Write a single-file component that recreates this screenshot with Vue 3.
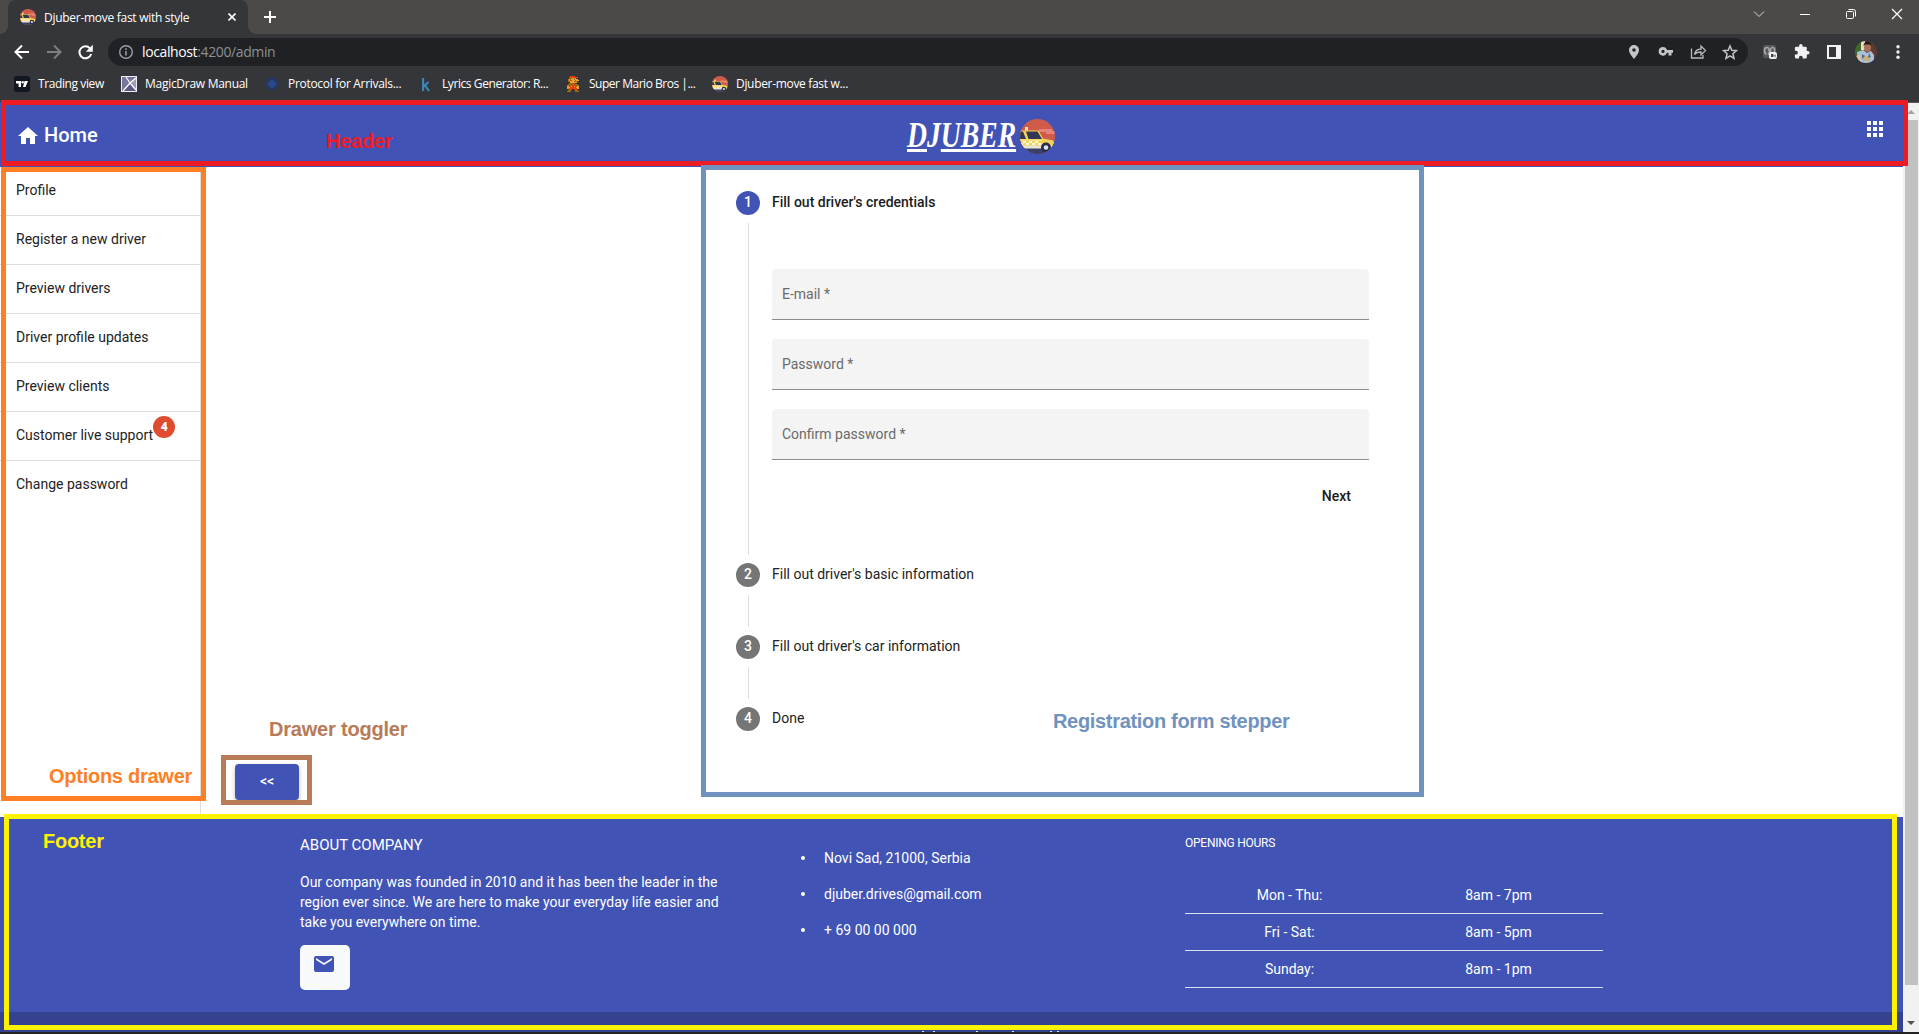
<script setup>
const bookmarks = [
  { icon: 'tv', label: 'Trading view', width: 107, spacing: -0.4 },
  { icon: 'md', label: 'MagicDraw Manual', width: 143, spacing: -0.28 },
  { icon: 'protocol', label: 'Protocol for Arrivals...', width: 154, spacing: -0.3 },
  { icon: 'k', label: 'Lyrics Generator: R...', width: 147, spacing: -0.42 },
  { icon: 'mario', label: 'Super Mario Bros |...', width: 147, spacing: -0.48 },
  { icon: 'taxi', label: 'Djuber-move fast w...', width: 150, spacing: -0.32 },
]
const menu = [
  'Profile',
  'Register a new driver',
  'Preview drivers',
  'Driver profile updates',
  'Preview clients',
  'Customer live support',
  'Change password',
]
const fields = ['E-mail *', 'Password *', 'Confirm password *']
const laterSteps = [
  { n: 2, label: "Fill out driver's basic information" },
  { n: 3, label: "Fill out driver's car information" },
  { n: 4, label: 'Done' },
]
const contacts = ['Novi Sad, 21000, Serbia', 'djuber.drives@gmail.com', '+ 69 00 00 000']
const hours = [
  ['Mon - Thu:', '8am - 7pm'],
  ['Fri - Sat:', '8am - 5pm'],
  ['Sunday:', '8am - 1pm'],
]
// Pixel sprite of the Mario bookmark: r = red, b = brown, s = skin
const sprite = [
  '...rrrrr....',
  '..rrrrrrrrr.',
  '..bbbssbs...',
  '.bsbsssbsss.',
  '.bsbbsssbsss',
  '.bbssssbbbb.',
  '...sssssss..',
  '..bbrbbb....',
  '.bbbrbbrbbb.',
  'bbbbrrrrbbbb',
  'ssbrsrrsrbss',
  'sssrrrrrrsss',
  'ssrrrrrrrrss',
  '..rrr..rrr..',
  '.bbb....bbb.',
  'bbbb....bbbb',
]
const spriteColors = { r: '#e8400c', b: '#a06a10', s: '#f0a030' }
const pixels = sprite.flatMap((row, y) =>
  [...row].map((c, x) => ({ x, y, fill: spriteColors[c] })).filter((p) => p.fill),
)
</script>

<template>
  <div class="screen">
    <svg width="0" height="0" class="defs">
      <defs>
        <clipPath id="disc"><circle cx="17.5" cy="17.5" r="17.5" /></clipPath>
        <symbol id="taxi" viewBox="0 0 35 35">
          <g clip-path="url(#disc)">
            <rect width="35" height="35" fill="#cf5b4b" />
            <path d="M19 10h13v2h3v3h-9v-2h-7z" fill="#e58279" />
            <rect y="26" width="35" height="9" fill="#3b3f69" />
            <path d="M0 11.500h18.500l4.500 8 10 2 2 3v4H0z" fill="#f2d355" />
            <path d="M0 12.500h3l3 7.500H0zM6 12.500h11.500l4.500 7.500H8.500z" fill="#333754" />
            <path d="M0 20.500h22v1.500H0z" fill="#f8e08a" />
            <path d="M0 24h3v2H0zM6 24h3v2H6zM12 24h3v2h-3zM18 24h3v2h-3zM3 22h3v2H3zM9 22h3v2H9zM15 22h3v2h-3z" fill="#fff8dc" />
            <path d="M0 26.500h35v3H0z" fill="#e9e5d5" />
            <rect x="5" y="8" width="3" height="3.500" fill="#f6e7b4" />
            <circle cx="26" cy="28.500" r="5" fill="#292d4d" />
            <circle cx="26" cy="28.500" r="2.300" fill="#dfe3ee" />
          </g>
        </symbol>
      </defs>
    </svg>

    <div class="tabstrip">
      <div class="tab">
        <svg width="16" height="16"><use href="#taxi" /></svg>
        <span class="tab-title">Djuber-move fast with style</span>
        <svg class="tab-close" width="8" height="8" viewBox="0 0 8 8"><path d="M.5.5l7 7M7.500.5l-7 7" stroke="#fff" stroke-width="1.600" /></svg>
      </div>
      <svg class="tab-add" width="12" height="12" viewBox="0 0 12 12"><path d="M6 0v12M0 6h12" stroke="#fff" stroke-width="2" /></svg>
      <div class="window-controls">
        <svg width="46" height="28" viewBox="0 0 46 28" fill="none" stroke="#d8d8d7"><path d="M18 11.500l5 5 5-5" /></svg>
        <svg width="46" height="28" viewBox="0 0 46 28" fill="none" stroke="#fff"><path d="M18 14.500h10" /></svg>
        <svg width="46" height="28" viewBox="0 0 46 28" fill="none" stroke="#fff"><rect x="18.500" y="11.500" width="7" height="7" rx="1" /><path d="M20.500 9.500h5a2 2 0 0 1 2 2v5" /></svg>
        <svg width="46" height="28" viewBox="0 0 46 28" fill="none" stroke="#fff" stroke-width="1.200"><path d="M18 9l10 10M28 9l-10 10" /></svg>
      </div>
    </div>

    <div class="toolbar">
      <svg width="32" height="28" viewBox="0 0 32 28" fill="none" stroke="#fff" stroke-width="2"><path d="M23 14H10M16 7.500L9.500 14l6.500 6.500" /></svg>
      <svg width="32" height="28" viewBox="0 0 32 28" fill="none" stroke="#7d7e80" stroke-width="2"><path d="M9 14h13M16 7.500l6.500 6.500-6.500 6.500" /></svg>
      <svg width="32" height="28" viewBox="0 0 32 28"><path d="M20 10.300A6 6 0 1 0 21.200 16" fill="none" stroke="#fff" stroke-width="2" /><path d="M22.800 6.800v7h-7z" fill="#fff" /></svg>
      <div class="omnibox">
        <svg width="14" height="14" viewBox="0 0 14 14"><circle cx="7" cy="7" r="6.300" fill="none" stroke="#9aa0a6" stroke-width="1.400" /><path d="M7 6v4.500M7 3.300v1.600" stroke="#9aa0a6" stroke-width="1.500" /></svg>
        <span class="url"><b>localhost</b>:4200/admin</span>
        <div class="omni-icons">
          <svg width="32" height="28" viewBox="0 0 32 28"><path fill-rule="evenodd" d="M16 7a5 5 0 0 0-5 5c0 3.500 5 9 5 9s5-5.500 5-9a5 5 0 0 0-5-5zm0 3.200a1.800 1.800 0 1 1 0 3.600 1.800 1.800 0 0 1 0-3.600z" fill="#c4c5c7" /></svg>
          <svg width="32" height="28" viewBox="0 0 32 28"><path fill-rule="evenodd" d="M13 9a4.300 4.300 0 1 0 4 5.800h1.500V17.500h3v-2.700H23v-2.900h-6A4.300 4.300 0 0 0 13 9zm0 2.800a1.600 1.600 0 1 1 0 3.200 1.600 1.600 0 0 1 0-3.200z" fill="#c4c5c7" /></svg>
          <svg width="32" height="28" viewBox="0 0 32 28" fill="none" stroke="#b9babc" stroke-width="1.300"><path d="M9.500 10.500v9.500h11.500v-3M12.500 16.500c.8-4 3-5.500 6.500-5.500V8l4.500 4.500-4.500 4.500v-3c-3 0-5 .5-6.500 2.500z" /></svg>
          <svg width="32" height="28" viewBox="0 0 32 28" fill="none" stroke="#c4c5c7" stroke-width="1.500"><path d="M16 8l1.800 4.300 4.600.4-3.500 3 1.100 4.600-4-2.500-4 2.500 1.100-4.600-3.500-3 4.600-.4z" /></svg>
        </div>
      </div>
      <div class="extensions">
        <svg width="32" height="28" viewBox="0 0 32 28"><rect x="9" y="7" width="13" height="13" rx="2.500" fill="#58595b" /><path d="M12.300 16.500c-3-3-2-7 .7-7s3 6 1 7m3.500-1c-2-3-1-6 1-6s3 3 1.500 5" fill="none" stroke="#aaa" stroke-width="1.600" /><rect x="15" y="14" width="8" height="7" rx="2" fill="#f0f0f0" /><path d="M17 16h2.500v3H17zm3 1.500l1.500-1v3z" fill="#444" /></svg>
        <svg width="32" height="28" viewBox="0 0 32 28"><path transform="translate(7.500 5.200) scale(.7)" d="M20.500 11H19V7a2 2 0 0 0-2-2h-4V3.500a2.500 2.500 0 0 0-5 0V5H4a2 2 0 0 0-2 2v3.800h1.500a2.700 2.700 0 0 1 0 5.400H2V20a2 2 0 0 0 2 2h3.800v-1.500a2.700 2.700 0 0 1 5.400 0V22H17a2 2 0 0 0 2-2v-4h1.500a2.500 2.500 0 0 0 0-5z" fill="#f1f1f2" /></svg>
        <svg width="32" height="28" viewBox="0 0 32 28"><path fill-rule="evenodd" d="M9 7h14v14H9zm2 2v10h7V9z" fill="#f4f4f5" /></svg>
        <svg width="32" height="28" viewBox="0 0 32 28">
          <clipPath id="face"><circle cx="16" cy="14" r="11" /></clipPath>
          <g clip-path="url(#face)">
            <rect width="32" height="28" fill="#5d3b32" />
            <path d="M5 3h9v9l-4 5H5z" fill="#3f6b28" /><path d="M11 3h4v9h-4z" fill="#e9dcc2" />
            <ellipse cx="17.500" cy="9.500" rx="3.500" ry="4.500" fill="#a8705a" /><path d="M13.500 8c0-6 8-6 8 0l-1.500-1.500h-5z" fill="#231c1c" />
            <path d="M7 14l6-2 4 3 4-2 3 4v10H8z" fill="#a9c0da" /><path d="M13 18h7v5h-7z" fill="#c9b27c" /><path d="M12 16l3 2-3 3zM19 15l2 4-3 1z" fill="#566a88" /><path d="M6 18l4-2 2 9z" fill="#d8c0a7" />
          </g>
        </svg>
        <svg width="32" height="28" viewBox="0 0 32 28" fill="#f1f1f2"><circle cx="16" cy="8.700" r="1.700" /><circle cx="16" cy="14" r="1.700" /><circle cx="16" cy="19.300" r="1.700" /></svg>
      </div>
    </div>

    <div class="bookmarks">
      <div v-for="b in bookmarks" :key="b.label" class="bookmark" :style="{ width: b.width + 'px', letterSpacing: b.spacing + 'px' }">
        <svg v-if="b.icon === 'tv'" width="16" height="16" viewBox="0 0 16 16"><rect width="16" height="16" rx="3" fill="#131722" /><path d="M2 5h5v6H4.600V7.500H2zM10.500 5H14l-2.500 6H9z" fill="#fff" /><circle cx="8.700" cy="6.300" r="1.200" fill="#fff" /></svg>
        <svg v-else-if="b.icon === 'md'" width="16" height="16" viewBox="0 0 16 16"><rect width="16" height="16" fill="#ecedf5" /><path d="M1 1h14v14H1z" fill="#77779e" /><path d="M9 7l6-5v11z" fill="#9a9abb" /><path d="M1 15l7-7 7 7z" fill="#5a5a80" /><path d="M5 1l4 6 6 7M15 2L9 7l-7 8" stroke="#fff" stroke-width="1.200" fill="none" /></svg>
        <svg v-else-if="b.icon === 'protocol'" width="16" height="16" viewBox="0 0 16 16"><circle cx="8" cy="8" r="6" fill="#243866" stroke="#213c78" stroke-dasharray="1.500 .8" /><circle cx="8" cy="8" r="3" fill="none" stroke="#3155a2" /><path d="M8 4.500v7M4.500 8h7" stroke="#3155a2" /></svg>
        <svg v-else-if="b.icon === 'k'" width="16" height="16" viewBox="0 0 16 16"><path d="M5.100 2v13M5.500 10.500l5-4.500M7 9.300l4 5.700" stroke="#3d87b9" stroke-width="2.100" fill="none" /></svg>
        <svg v-else-if="b.icon === 'mario'" width="16" height="16" viewBox="-2 0 16 16" shape-rendering="crispEdges"><rect v-for="(p, i) in pixels" :key="i" :x="p.x" :y="p.y" width="1" height="1" :fill="p.fill" /></svg>
        <svg v-else width="16" height="16"><use href="#taxi" /></svg>
        <span>{{ b.label }}</span>
      </div>
    </div>

    <div class="viewport">
      <div class="page">
        <header class="header">
          <div class="home">
            <svg width="24" height="24" viewBox="0 0 24 24"><path d="M10 20v-6h4v6h5v-8h3L12 3 2 12h3v8z" fill="#fff" /></svg>
            <span>Home</span>
          </div>
          <div class="brand">
            <div class="wordmark"><u>D</u>J<u>UBER</u></div>
            <svg width="35" height="35"><use href="#taxi" /></svg>
          </div>
          <svg class="apps" width="16" height="16" viewBox="0 0 16 16"><path d="M0 0h4v4H0zM6 0h4v4H6zM12 0h4v4h-4zM0 6h4v4H0zM6 6h4v4H6zM12 6h4v4h-4zM0 12h4v4H0zM6 12h4v4H6zM12 12h4v4h-4z" fill="#fff" /></svg>
        </header>

        <div class="body">
          <nav class="drawer">
            <div v-for="item in menu" :key="item" class="drawer-item">
              <span class="drawer-label">{{ item }}<i v-if="item === 'Customer live support'" class="badge">4</i></span>
            </div>
          </nav>
          <main class="content">
            <button class="toggle">&lt;&lt;</button>
            <section class="stepper">
              <div class="step-header active"><i class="num">1</i><span>Fill out driver's credentials</span></div>
              <div class="step-body">
                <div v-for="f in fields" :key="f" class="field">{{ f }}</div>
                <div class="next-row"><span>Next</span></div>
              </div>
              <div v-for="s in laterSteps" :key="s.n" class="step-header" :class="{ linked: s.n < 4 }"><i class="num">{{ s.n }}</i><span>{{ s.label }}</span></div>
            </section>
          </main>
        </div>

        <footer class="footer">
          <div class="footer-main">
            <div class="about">
              <h5>ABOUT COMPANY</h5>
              <p>Our company was founded in 2010 and it has been the leader in the<br />region ever since. We are here to make your everyday life easier and<br />take you everywhere on time.</p>
              <div class="mail"><svg width="20" height="16" viewBox="0 0 20 16"><path fill-rule="evenodd" d="M2 0h16a2 2 0 0 1 2 2v12a2 2 0 0 1-2 2H2a2 2 0 0 1-2-2V2a2 2 0 0 1 2-2zm16 4V2l-8 5-8-5v2l8 5z" fill="#4154b6" /></svg></div>
            </div>
            <ul class="contacts">
              <li v-for="c in contacts" :key="c">{{ c }}</li>
            </ul>
            <div class="hours">
              <h6>OPENING HOURS</h6>
              <div v-for="h in hours" :key="h[0]" class="hours-row"><span>{{ h[0] }}</span><span>{{ h[1] }}</span></div>
            </div>
          </div>
          <div class="copyright">
            <svg width="140" height="1" viewBox="0 0 140 1"><path d="M0 0h2v1H0zM11 0h2v1h-2zM54 0h2v1h-2zM90 0h2v1h-2zM128 0h2v1h-2zM135 0h2v1h-2z" fill="#dfe2f2" /></svg>
          </div>
        </footer>
      </div>
      <div class="scrollbar">
        <svg width="15" height="17" viewBox="0 0 15 17"><path d="M4 11h8L8 7z" fill="#a3a3a3" /></svg>
        <div class="thumb"></div>
        <svg class="down" width="15" height="17" viewBox="0 0 15 17"><path d="M4 6h8l-4 4z" fill="#505050" /></svg>
      </div>
    </div>

    <div class="frame frame-header"></div>
    <div class="frame frame-drawer"></div>
    <div class="frame frame-stepper"></div>
    <div class="frame frame-toggle"></div>
    <div class="frame frame-footer"></div>
    <span class="note note-header">Header</span>
    <span class="note note-drawer">Options drawer</span>
    <span class="note note-stepper">Registration form stepper</span>
    <span class="note note-toggle">Drawer toggler</span>
    <span class="note note-footer">Footer</span>
  </div>
</template>

<style>
body { margin: 0; overflow: hidden; }
</style>

<style scoped>
* { box-sizing: border-box; }
svg { display: block; flex: none; }
.screen { position: relative; width: 1919px; height: 1034px; overflow: hidden; display: flex; flex-direction: column; background: #242424; font-family: Roboto, sans-serif; font-size: 14px; white-space: nowrap; }
.defs { position: absolute; }

.tabstrip { height: 34px; flex: none; display: flex; background: #4b4a47; padding-left: 8px; font-family: "Open Sans", sans-serif; }
.tab { position: relative; width: 240px; height: 34px; display: flex; align-items: center; padding: 0 12px; background: #35363a; border-radius: 8px 8px 0 0; color: #fff; font-size: 12px; }
.tab::before, .tab::after { content: ""; position: absolute; bottom: 0; width: 8px; height: 8px; }
.tab::before { left: -8px; background: radial-gradient(circle at 0 0, transparent 7.500px, #35363a 8px); }
.tab::after { right: -8px; background: radial-gradient(circle at 100% 0, transparent 7.500px, #35363a 8px); }
.tab-title { margin-left: 8px; letter-spacing: -0.28px; }
.tab-close { margin-left: auto; }
.tab-add { margin: 11px 0 0 16px; }
.window-controls { margin-left: auto; display: flex; margin-right: -1px; }

.toolbar { height: 32px; flex: none; display: flex; padding-top: 4px; padding-left: 6px; background: #35363a; }
.omnibox { margin-left: 6px; width: 1640px; height: 28px; display: flex; align-items: center; padding-left: 11px; background: #202124; border-radius: 14px; font-family: "Open Sans", sans-serif; }
.url { margin-left: 9px; padding-bottom: 1px; color: #8d9094; font-size: 14px; letter-spacing: -0.38px; }
.url b { color: #fff; font-weight: 400; }
.omni-icons { margin-left: auto; margin-right: 2px; display: flex; }
.extensions { display: flex; margin-left: 6px; }

.bookmarks { height: 36px; flex: none; display: flex; padding-left: 14px; background: #35363a; color: #fff; font-family: "Open Sans", sans-serif; font-size: 12px; }
.bookmark { flex: none; display: flex; height: 36px; align-items: center; gap: 8px; }
.bookmark span { padding-bottom: 2px; }

.viewport { height: 930px; flex: none; display: flex; }
.page { width: 1903px; display: flex; flex-direction: column; background: #fff; }
.header { height: 65px; flex: none; display: flex; background: #4154b6; color: #fff; }
.home { flex: none; width: 907px; display: flex; align-items: center; padding: 2px 0 0 16px; font-size: 20px; font-weight: 500; }
.home span { margin-left: 4px; padding-bottom: 1px; }
.brand { display: flex; padding-top: 17px; }
.wordmark { width: 113px; height: 35px; font: italic 700 35px/34px "Liberation Serif", serif; transform: scaleX(0.79); transform-origin: 0 0; }
.wordmark u { text-decoration-thickness: 3px; text-underline-offset: 2px; }
.apps { margin: 19px 20px 0 auto; }

.body { height: 650px; flex: none; display: flex; }
.drawer { width: 201px; height: 650px; border-right: 1px solid #dedede; color: #222; }
.drawer-item { height: 49px; display: flex; align-items: center; padding: 0 0 2px 16px; border-bottom: 1px solid #dedede; }
.drawer-item:last-child { border-bottom-color: transparent; }
.drawer-label { position: relative; }
.badge { position: absolute; left: 100%; top: -11px; width: 22px; height: 22px; border-radius: 50%; background: #e04c2f; color: #fff; font: 900 12px/22px Roboto, sans-serif; text-align: center; }
.content { flex: 1; display: flex; }
.toggle { align-self: flex-end; width: 64px; height: 36px; margin: 0 0 17px 34px; padding: 0 0 2px; border: 0; border-radius: 4px; background: #4154b6; color: #fff; font: 500 14px/34px Roboto, sans-serif; box-shadow: 0 2px 4px rgba(0, 0, 0, 0.25); }
.stepper { width: 681px; margin-left: 413px; color: #222; }
.step-header { position: relative; height: 72px; display: flex; align-items: center; padding-left: 24px; gap: 12px; }
.step-header span { padding-bottom: 2px; }
.num { width: 24px; height: 24px; border-radius: 50%; background: #757575; color: #fff; font: 500 14px/23px Roboto, sans-serif; text-align: center; }
.active .num { background: #4154b6; }
.active span { font-weight: 500; color: #1c1c1c; }
.linked::after { content: ""; position: absolute; left: 36px; top: 56px; width: 1px; height: 32px; background: #dedede; }
.step-body { position: relative; height: 300px; padding: 30px 24px 0 60px; }
.step-body::before { content: ""; position: absolute; left: 36px; top: -16px; bottom: -16px; width: 1px; background: #dedede; }
.field { height: 51px; margin-bottom: 19px; padding-left: 10px; line-height: 50px; border-bottom: 1px solid #8c8c8c; border-radius: 4px 4px 0 0; background: #f4f4f4; color: #6b6b6b; }
.next-row { display: flex; justify-content: flex-end; padding-right: 18px; line-height: 34px; color: #1c1c1c; font-weight: 500; }

.footer { height: 215px; flex: none; background: #4154b6; color: #fff; }
.footer-main { height: 195px; display: flex; padding-left: 300px; }
.about { width: 461px; padding-top: 17px; }
h5, h6, p, ul { margin: 0; padding: 0; font-weight: 400; }
h5 { font-size: 15px; line-height: 22px; }
p { margin-top: 16px; line-height: 20px; }
.mail { width: 50px; height: 45px; margin-top: 13px; padding: 11px 0 0 14px; border-radius: 5px; background: #f8f9fa; }
.contacts { width: 424px; padding: 23px 0 0 63px; list-style: none; }
.contacts li { position: relative; height: 36px; line-height: 36px; }
.contacts li::before { content: ""; position: absolute; left: -23px; top: 16px; width: 4px; height: 4px; border-radius: 50%; background: #fff; }
.hours { width: 418px; padding-top: 16px; }
h6 { font-size: 12px; line-height: 20px; letter-spacing: -0.25px; margin-bottom: 24px; }
.hours-row { height: 37px; display: flex; line-height: 36px; border-bottom: 1px solid #dee2f0; }
.hours-row span { width: 209px; text-align: center; }
.copyright { height: 20px; display: flex; align-items: flex-end; padding-left: 922px; background: #35428f; }

.scrollbar { width: 16px; height: 930px; display: flex; flex-direction: column; background: #f1f1f1; border-top: 1px solid #5a5b5e; }
.thumb { width: 13px; height: 865px; margin-left: 2px; background: #c1c1c1; }
.down { margin-top: auto; }

.frame { position: absolute; border: 5px solid; }
.frame-header { left: 1px; top: 100px; width: 1907px; height: 66px; border-color: #ed1c24; }
.frame-drawer { left: 1px; top: 167px; width: 205px; height: 634px; border-color: #ff7f27; }
.frame-stepper { left: 701px; top: 165px; width: 723px; height: 632px; border-color: #7092be; }
.frame-toggle { left: 221px; top: 755px; width: 91px; height: 50px; border-color: #b97a57; }
.frame-footer { left: 4px; top: 814px; width: 1893px; height: 216px; border-color: #fff200; }
.note { position: absolute; font: 700 20px/24px "Liberation Sans", Arial, sans-serif; letter-spacing: -0.26px; }
.note-header { left: 326px; top: 129px; color: #ed1c24; }
.note-drawer { left: 49px; top: 764px; color: #ff7f27; }
.note-stepper { left: 1053px; top: 709px; color: #7092be; letter-spacing: -0.32px; }
.note-toggle { left: 269px; top: 717px; color: #b97a57; letter-spacing: -0.2px; }
.note-footer { left: 43px; top: 829px; color: #fff200; }
</style>
